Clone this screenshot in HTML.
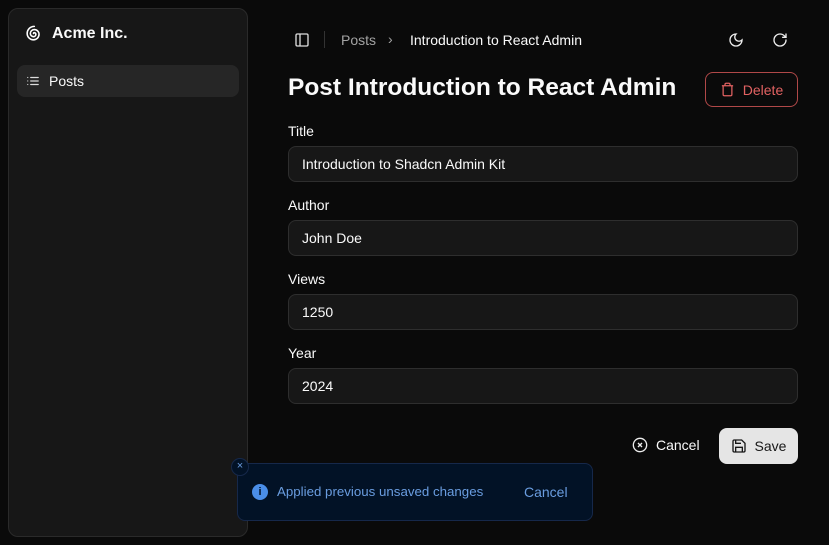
<!DOCTYPE html>
<html><head><meta charset="utf-8"><style>
*{box-sizing:border-box;margin:0;padding:0}
body{width:829px;height:545px;background:#0a0a0a;font-family:"Liberation Sans",sans-serif;color:#fafafa;position:relative;overflow:hidden;font-size:14px}
.side{position:absolute;left:8px;top:8px;width:240px;height:529px;background:#171717;border:1px solid #2a2a2a;border-radius:10px}
.brand{position:absolute;left:15px;top:15px;font-weight:bold;font-size:16px;display:flex;align-items:center;gap:9px}
.nav{position:absolute;left:8px;top:56px;width:222px;height:32px;background:#262626;border-radius:8px;display:flex;align-items:center;padding-left:9px;gap:9px;font-size:14px}
.abs{position:absolute}
.lbl{position:absolute;left:288px;font-size:14px}
.inp{position:absolute;left:288px;width:510px;height:36px;border:1px solid #2e2e2e;background:#171717;border-radius:8px;padding-left:13px;display:flex;align-items:center;font-size:14px}
svg{display:block}
</style></head><body>
<div class="side">
 <div class="brand"><svg width="19" height="19" viewBox="0 0 24 24" fill="none" stroke="#fff" stroke-width="2" stroke-linecap="round"><path d="M12 12a1 1 0 0 1 1-1 2 2 0 0 1 2 2 3 3 0 0 1-3 3 4 4 0 0 1-4-4 5 5 0 0 1 5-5 6 6 0 0 1 6 6 7 7 0 0 1-7 7 8 8 0 0 1-8-8 9 9 0 0 1 9-9"/></svg>Acme Inc.</div>
 <div class="nav"><svg width="14" height="14" viewBox="0 0 24 24" fill="none" stroke="#ddd" stroke-width="2" stroke-linecap="round"><path d="M3 6h.01M3 12h.01M3 18h.01M8 6h13M8 12h13M8 18h13"/></svg>Posts</div>
</div>
<svg class="abs" style="left:294px;top:32px" width="16" height="16" viewBox="0 0 24 24" fill="none" stroke="#ddd" stroke-width="2"><rect x="3" y="3" width="18" height="18" rx="2"/><path d="M9 3v18"/></svg>
<div class="abs" style="left:324px;top:31px;width:1px;height:17px;background:#333"></div>
<div class="abs" style="left:341px;top:32px;color:#a3a3a3">Posts</div>
<div class="abs" style="left:388px;top:31px;color:#a3a3a3">›</div>
<div class="abs" style="left:410px;top:32px">Introduction to React Admin</div>
<svg class="abs" style="left:728px;top:32px" width="16" height="16" viewBox="0 0 24 24" fill="none" stroke="#eee" stroke-width="2"><path d="M12 3a6 6 0 0 0 9 9 9 9 0 1 1-9-9Z"/></svg>
<svg class="abs" style="left:772px;top:32px" width="16" height="16" viewBox="0 0 24 24" fill="none" stroke="#eee" stroke-width="2" stroke-linecap="round"><path d="M21 12a9 9 0 1 1-9-9c2.5 0 4.8 1 6.5 2.7L21 8"/><path d="M21 3v5h-5"/></svg>
<div class="abs" style="left:288px;top:74px;font-size:24.5px;font-weight:bold">Post Introduction to React Admin</div>
<div class="abs" style="left:705px;top:72px;width:93px;height:35px;border:1px solid #b04848;border-radius:8px;display:flex;align-items:center;justify-content:center;gap:8px;color:#e26262"><svg width="15" height="15" viewBox="0 0 24 24" fill="none" stroke="#e26262" stroke-width="2"><path d="M3 6h18M19 6v14a2 2 0 0 1-2 2H7a2 2 0 0 1-2-2V6M8 6V4a2 2 0 0 1 2-2h4a2 2 0 0 1 2 2v2"/></svg>Delete</div>
<div class="lbl" style="top:123px">Title</div><div class="inp" style="top:146px">Introduction to Shadcn Admin Kit</div>
<div class="lbl" style="top:197px">Author</div><div class="inp" style="top:220px">John Doe</div>
<div class="lbl" style="top:271px">Views</div><div class="inp" style="top:294px">1250</div>
<div class="lbl" style="top:345px">Year</div><div class="inp" style="top:368px">2024</div>
<div class="abs" style="left:632px;top:437px;display:flex;align-items:center;gap:8px"><svg width="16" height="16" viewBox="0 0 24 24" fill="none" stroke="#eee" stroke-width="2"><circle cx="12" cy="12" r="10"/><path d="M15 9l-6 6M9 9l6 6"/></svg>Cancel</div>
<div class="abs" style="left:719px;top:428px;width:79px;height:36px;background:#e5e5e5;border-radius:8px;color:#171717;display:flex;align-items:center;justify-content:center;gap:8px"><svg width="16" height="16" viewBox="0 0 24 24" fill="none" stroke="#171717" stroke-width="2"><path d="M5 3h11l5 5v11a2 2 0 0 1-2 2H5a2 2 0 0 1-2-2V5a2 2 0 0 1 2-2z"/><path d="M17 21v-7H7v7M7 3v5h8"/></svg>Save</div>
<div class="abs" style="left:237px;top:463px;width:356px;height:58px;background:#021226;border:1px solid #16284a;border-radius:8px"></div>
<div class="abs" style="left:231px;top:458px;width:18px;height:18px;border-radius:50%;background:#021226;border:1px solid #16284a;color:#6a9de0;font-size:11px;text-align:center;line-height:15px">×</div>
<div class="abs" style="left:252px;top:484px;width:16px;height:16px;border-radius:50%;background:#4a8ee8;color:#021226;font-size:11px;font-weight:bold;text-align:center;line-height:16px">i</div>
<div class="abs" style="left:277px;top:484px;color:#6a9de0;font-size:13.3px">Applied previous unsaved changes</div>
<div class="abs" style="left:524px;top:484px;color:#6a9de0">Cancel</div>
</body></html>
